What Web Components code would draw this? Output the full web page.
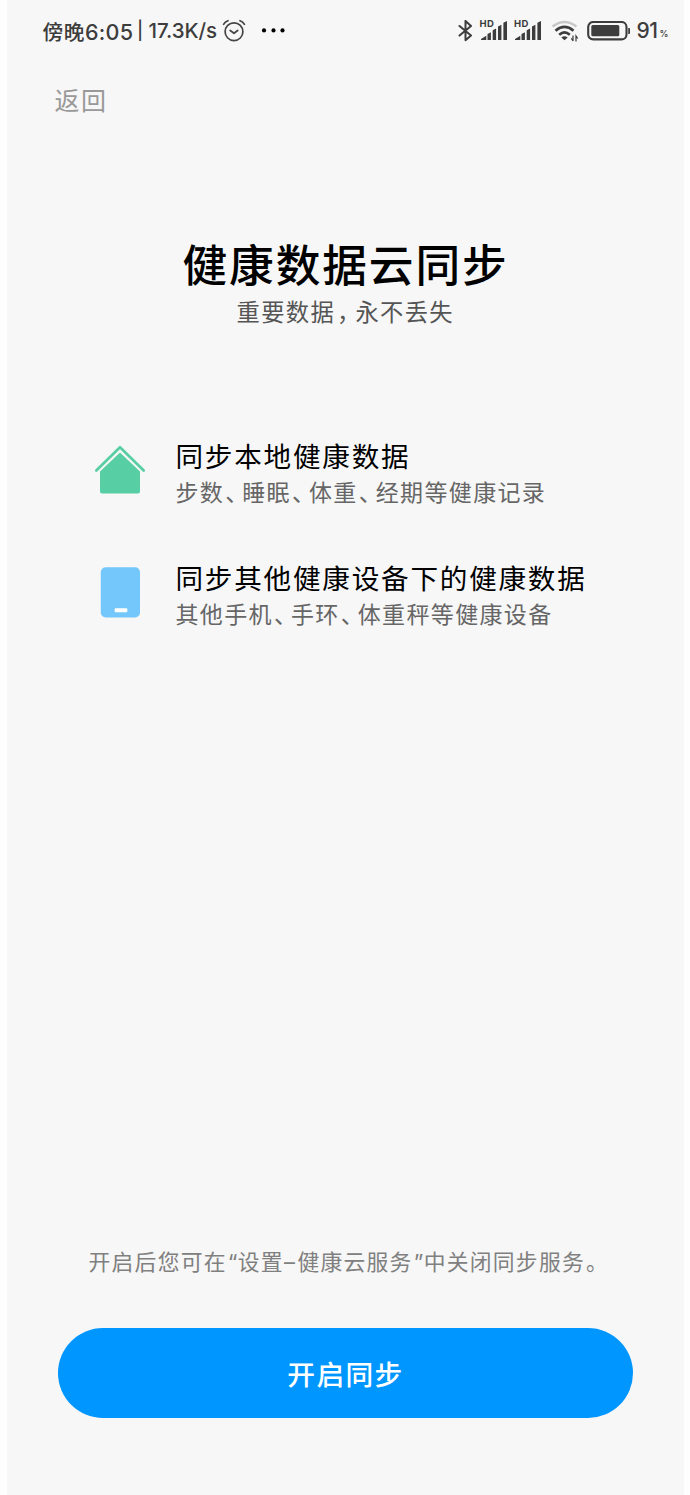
<!DOCTYPE html>
<html lang="zh-CN">
<head>
<meta charset="utf-8">
<title>健康数据云同步</title>
<style>
html{background:#fefefe}
body{margin:0;font-family:"Noto Sans CJK SC",sans-serif}
</style>
</head>
<body>
<sync-page></sync-page>
<script>
const define = (name, html) => customElements.define(name, class extends HTMLElement {
  constructor() {
    super();
    const t = document.createElement('template');
    t.innerHTML = html;
    this.attachShadow({mode: 'open'}).append(t.content.cloneNode(true));
  }
});

define('punct-cell', `<style>:host{display:inline-block;box-sizing:border-box;width:var(--w,18px);padding-left:var(--p,1px);letter-spacing:0;white-space:nowrap;font-feature-settings:"halt"}</style><slot></slot>`);

define('signal-icon', `<style>
:host{display:block;position:relative;width:28px;height:22px;color:#3c3c3c}
svg{display:block}
span{position:absolute;left:0;top:-1px;font:700 9.5px/9px Inter,sans-serif;letter-spacing:.4px}
</style>
<svg width="28" height="22" viewBox="0 0 28 22" fill="currentColor"><path d="M1 20V19L6.3 15.8V20Z"/><path d="M7.5 14 10.9 12.3V20H7.5ZM12.7 10.3 16.1 8.5V20H12.7ZM18 6.5 21.4 4.8V20H18ZM23.4 2.7 27 1V20H23.4Z"/></svg><span>HD</span>`);

define('alarm-icon', `<style>:host{display:block;width:24px;height:24px}svg{display:block}</style>
<svg width="24" height="24" viewBox="0 0 24 24" fill="none" stroke="#444" stroke-width="1.7" stroke-linecap="round" stroke-linejoin="round"><circle cx="12" cy="12.7" r="8.9"/><path d="M8.2 11.5 12 14.3 15.7 11.5M1.6 5.3Q3 2.8 6 1.7M22.4 5.3Q21 2.8 18 1.7"/></svg>`);

define('status-bar', `<style>
:host{display:flex;align-items:center;height:62px;padding:0 17px 0 35.5px;box-sizing:border-box;color:#3d3d3d;font-weight:500;font-size:20.7px;line-height:30px;white-space:nowrap}
svg{display:block;flex:none}
.time{width:94.5px;letter-spacing:.5px}
.n{font-family:Inter,sans-serif;font-size:21.5px;letter-spacing:.3px}
.bar{width:11.5px;font:500 18px/26px Inter,sans-serif}
.speed{width:73px;font-family:Inter,sans-serif;font-size:20.5px;letter-spacing:-.05px}
.dots{margin-left:15px}
.bt{margin-left:auto}
signal-icon{flex:none;margin-left:6.5px}
.pct{font:500 21px/30px Inter,sans-serif;letter-spacing:-.4px;width:23px;margin-left:5.5px}
small{font:500 9px/10px Inter,sans-serif;width:7.5px;margin-top:6px}
</style>
<span class="time">傍晚<span class="n">6:05</span></span><span class="bar">|</span><span class="speed">17.3K/s</span>
<alarm-icon></alarm-icon>
<svg class="dots" width="26" height="6" viewBox="0 0 26 6"><circle cx="3" cy="2.4" r="2.1"/><circle cx="12.5" cy="2.4" r="2.1"/><circle cx="21.5" cy="2.4" r="2.1"/></svg>
<svg class="bt" width="15" height="22" viewBox="0 0 15 22" fill="none" stroke="#3d3d3d" stroke-width="2" stroke-linejoin="round" stroke-linecap="round"><path d="M1.5 6 13 15.5 7.5 20.2V.9L13 6.1 1.5 15.6"/></svg>
<signal-icon></signal-icon><signal-icon></signal-icon>
<svg style="margin-left:8.5px" width="28" height="22" viewBox="0 0 28 22" fill="none" stroke="#3d3d3d" stroke-width="2.6"><path d="M1.5 6.5Q13.5-2.5 25.5 6.5" stroke="#c8c8c8" stroke-width="2.2"/><path d="M4.5 10.7Q13.5 3 22.5 10.7M8.2 14.7Q13.5 10 18.8 14.7"/><path d="M13.5 20.3 10.3 17.4Q13.5 15.2 16.7 17.4Z" fill="#3d3d3d" stroke="none"/><path d="M22 15.5V21M20.3 18.3 22 21M25 21.5V16L26.7 18.5" stroke-width="1.2"/></svg>
<svg style="margin-left:8.5px" width="44" height="20" viewBox="0 0 44 20"><rect x="1.2" y="1" width="38.3" height="17.4" rx="5" fill="none" stroke="#3d3d3d" stroke-width="2.1"/><rect x="4.3" y="4.1" width="28" height="11.2" rx="1.5" fill="#3d3d3d"/><path d="M41.2 7H42.2Q43 7 43 8V12Q43 13 42.2 13H41.2Z" fill="#3d3d3d"/></svg>
<span class="pct">91</span><small>%</small>`);

define('house-icon', `<style>:host,svg{display:block}</style>
<svg width="54" height="52" viewBox="0 0 54 52"><path d="M3.3 26.5 27 3.3 50.7 26.5" fill="none" stroke="#58cea4" stroke-width="2.7" stroke-linecap="round" stroke-linejoin="round"/><path d="M27 8.6 47 27.5V47.6Q47 49.6 45 49.6H9Q7 49.6 7 47.6V27.5Z" fill="#58cea4"/></svg>`);
define('phone-icon', `<style>:host,svg{display:block}</style>
<svg width="54" height="52" viewBox="0 0 54 52"><rect x="7.8" y="1.2" width="39.2" height="50.2" rx="5" fill="#74c7fa"/><rect x="21.7" y="42.3" width="12.6" height="4" rx="1" fill="#fff"/></svg>`);

define('sync-item', `<style>
:host{display:flex;align-items:center;height:76px;white-space:nowrap}
.icon{width:54px;margin-right:28.5px}
.text{flex:1;padding-top:1px}
.name{font-size:27.6px;line-height:40px;letter-spacing:1.77px;color:#000}
.desc{font-size:23px;line-height:32px;letter-spacing:1.36px;color:#666}
</style>
<div class="icon"><slot name="icon"></slot></div>
<div class="text"><div class="name"><slot name="name"></slot></div><div class="desc"><slot></slot></div></div>`);

define('pill-button', `<style>
:host{display:block}
button{display:block;width:100%;height:90px;border:0;border-radius:45px;padding:0;background:#0096ff;color:#fff;font:500 27.7px/87px "Noto Sans CJK SC",sans-serif;letter-spacing:1.4px}
</style><button><slot></slot></button>`);

define('sync-page', `<style>
:host{display:flex;flex-direction:column;box-sizing:border-box;width:677px;height:1495px;margin-left:7px;background:#f7f7f7}
.back{margin:19px 0 0 47.5px;font-size:25px;line-height:36px;letter-spacing:1.4px;color:#999}
h1{margin:113px 0 0 175.5px;font-size:44.7px;line-height:65px;letter-spacing:1.9px;font-weight:500;color:#000;white-space:nowrap}
.sub{margin:0 0 0 229.5px;font-size:23.3px;line-height:33px;letter-spacing:1.35px;color:#555;white-space:nowrap}
.list{display:flex;flex-direction:column;gap:46px;margin:104px 0 0 86px}
.note{margin:auto 0 50px 81.5px;font-size:21.8px;line-height:32px;letter-spacing:1.25px;color:#808080;white-space:nowrap}
pill-button{margin:0 51px 77px}
.q{font-family:Inter,sans-serif}
</style>
<status-bar></status-bar>
<div class="back">返回</div>
<h1>健康数据云同步</h1>
<div class="sub">重要数据<punct-cell style="--w:20.3px;--p:2px">，</punct-cell>永不丢失</div>
<div class="list">
<sync-item><house-icon slot="icon"></house-icon><span slot="name">同步本地健康数据</span>步数<punct-cell>、</punct-cell>睡眠<punct-cell>、</punct-cell>体重<punct-cell>、</punct-cell>经期等健康记录</sync-item>
<sync-item><phone-icon slot="icon"></phone-icon><span slot="name">同步其他健康设备下的健康数据</span>其他手机<punct-cell>、</punct-cell>手环<punct-cell>、</punct-cell>体重秤等健康设备</sync-item>
</div>
<div class="note">开启后您可在<punct-cell class="q" style="--w:11px">“</punct-cell>设置<punct-cell class="q" style="--w:13.5px;--p:0px">–</punct-cell>健康云服务<punct-cell class="q" style="--w:11px">”</punct-cell>中关闭同步服务<punct-cell>。</punct-cell></div>
<pill-button>开启同步</pill-button>`);
</script>
</body>
</html>
